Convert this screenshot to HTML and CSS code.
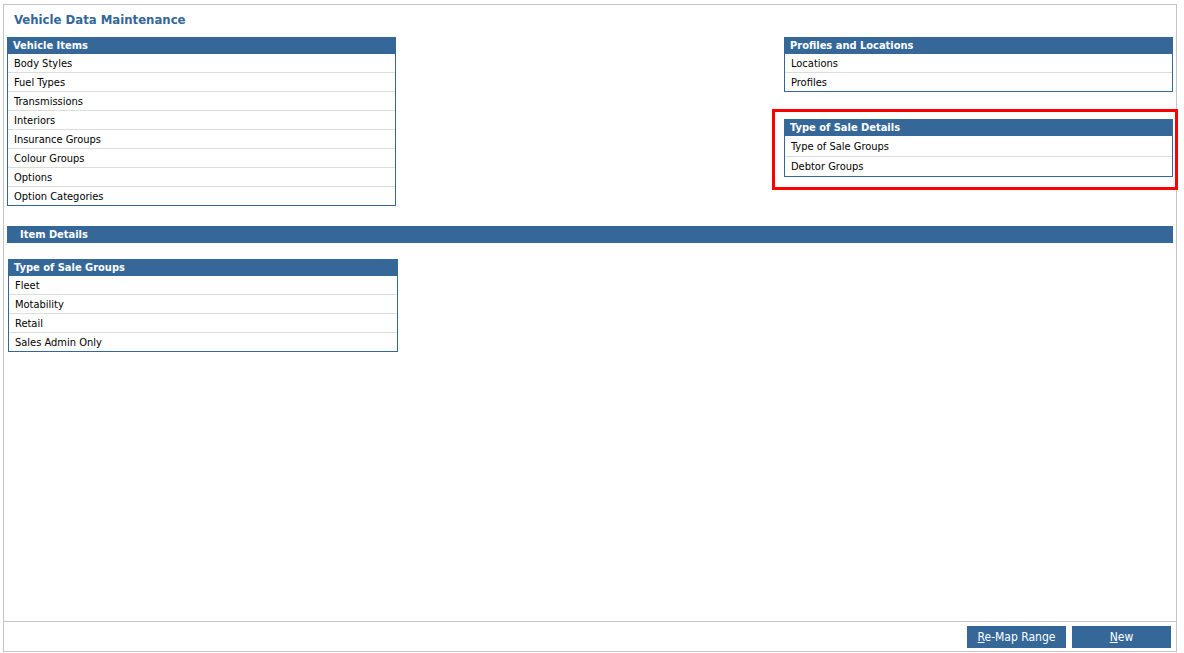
FILE: index.html
```html
<!DOCTYPE html>
<html lang="en">

<head>
    <meta charset="UTF-8">
    <title>Vehicle Data Maintenance</title>
    <link rel="stylesheet" href="styles.css">
</head>

<body>
    <div class="frame">
        <div class="content">
            <h1 class="title">Vehicle Data Maintenance</h1>

            <div class="top-row">
                <!-- left column -->
                <div class="panel panel-left">
                    <div class="panel-head">Vehicle Items</div>
                    <div class="row">Body Styles</div>
                    <div class="row">Fuel Types</div>
                    <div class="row">Transmissions</div>
                    <div class="row">Interiors</div>
                    <div class="row">Insurance Groups</div>
                    <div class="row">Colour Groups</div>
                    <div class="row">Options</div>
                    <div class="row">Option Categories</div>
                </div>

                <!-- right column -->
                <div class="right-col">
                    <div class="panel">
                        <div class="panel-head">Profiles and Locations</div>
                        <div class="row">Locations</div>
                        <div class="row">Profiles</div>
                    </div>

                    <div class="panel highlighted">
                        <div class="panel-head">Type of Sale Details</div>
                        <div class="row">Type of Sale Groups</div>
                        <div class="row">Debtor Groups</div>
                    </div>
                </div>
            </div>

            <div class="section-bar">Item Details</div>

            <div class="panel panel-detail">
                <div class="panel-head">Type of Sale Groups</div>
                <div class="row">Fleet</div>
                <div class="row">Motability</div>
                <div class="row">Retail</div>
                <div class="row">Sales Admin Only</div>
            </div>
        </div>

        <div class="footer">
            <button class="btn"><u>R</u>e-Map Range</button>
            <button class="btn"><u>N</u>ew</button>
        </div>
    </div>
</body>

</html>
```

FILE: styles.css
```css
body {
    margin: 0;
    background: #ffffff;
    font-family: "DejaVu Sans Condensed", "DejaVu Sans", sans-serif;
    font-size: 11px;
    color: #000;
}

.frame {
    margin: 4px 0 0 3px;
    width: 1172px;
    height: 646px;
    border: 1px solid #c4c4c4;
    display: flex;
    flex-direction: column;
}

.content {
    flex: 1;
    padding: 0 3px;
}

.title {
    margin: 0;
    padding: 7px 0 0 7px;
    height: 25px;
    box-sizing: border-box;
    font-size: 13px;
    font-weight: bold;
    color: #336699;
}

.top-row {
    display: flex;
    justify-content: space-between;
    align-items: flex-start;
    margin-top: 7px;
}

.panel {
    border: 1px solid #336699;
    border-top: none;
    background: #fff;
}

.panel-left {
    width: 387px;
}

.right-col {
    width: 389px;
    display: flex;
    flex-direction: column;
    gap: 27px;
}

.panel-head {
    background: #356899;
    color: #fff;
    font-weight: bold;
    height: 17px;
    line-height: 17px;
    padding-left: 6px;
    margin: 0 -1px;
}

.row {
    height: 19px;
    line-height: 19px;
    padding-left: 6px;
    border-top: 1px solid #dcdcdc;
    box-sizing: border-box;
}

.panel-head + .row {
    border-top: none;
    height: 18px;
}

/* red annotation round the sale details */
.highlighted {
    position: relative;
}

.highlighted .row {
    height: 20px;
    line-height: 22px;
}

.highlighted .row + .row {
    line-height: 20px;
}

.highlighted::after {
    content: "";
    position: absolute;
    top: -10px;
    left: -13px;
    right: -6px;
    bottom: -14px;
    border: 3px solid #ff0000;
}

.section-bar {
    margin-top: 20px;
    background: #356899;
    color: #fff;
    font-weight: bold;
    height: 17px;
    line-height: 17px;
    padding-left: 13px;
}

.panel-detail {
    width: 388px;
    margin: 16px 0 0 1px;
}

.footer {
    height: 29px;
    border-top: 1px solid #c4c4c4;
    display: flex;
    justify-content: flex-end;
    align-items: center;
    gap: 6px;
    padding-right: 5px;
}

.btn {
    width: 99px;
    height: 22px;
    border: none;
    background: #356899;
    color: #fff;
    font-family: inherit;
    font-size: 12px;
    padding: 0;
    cursor: pointer;
}
```
